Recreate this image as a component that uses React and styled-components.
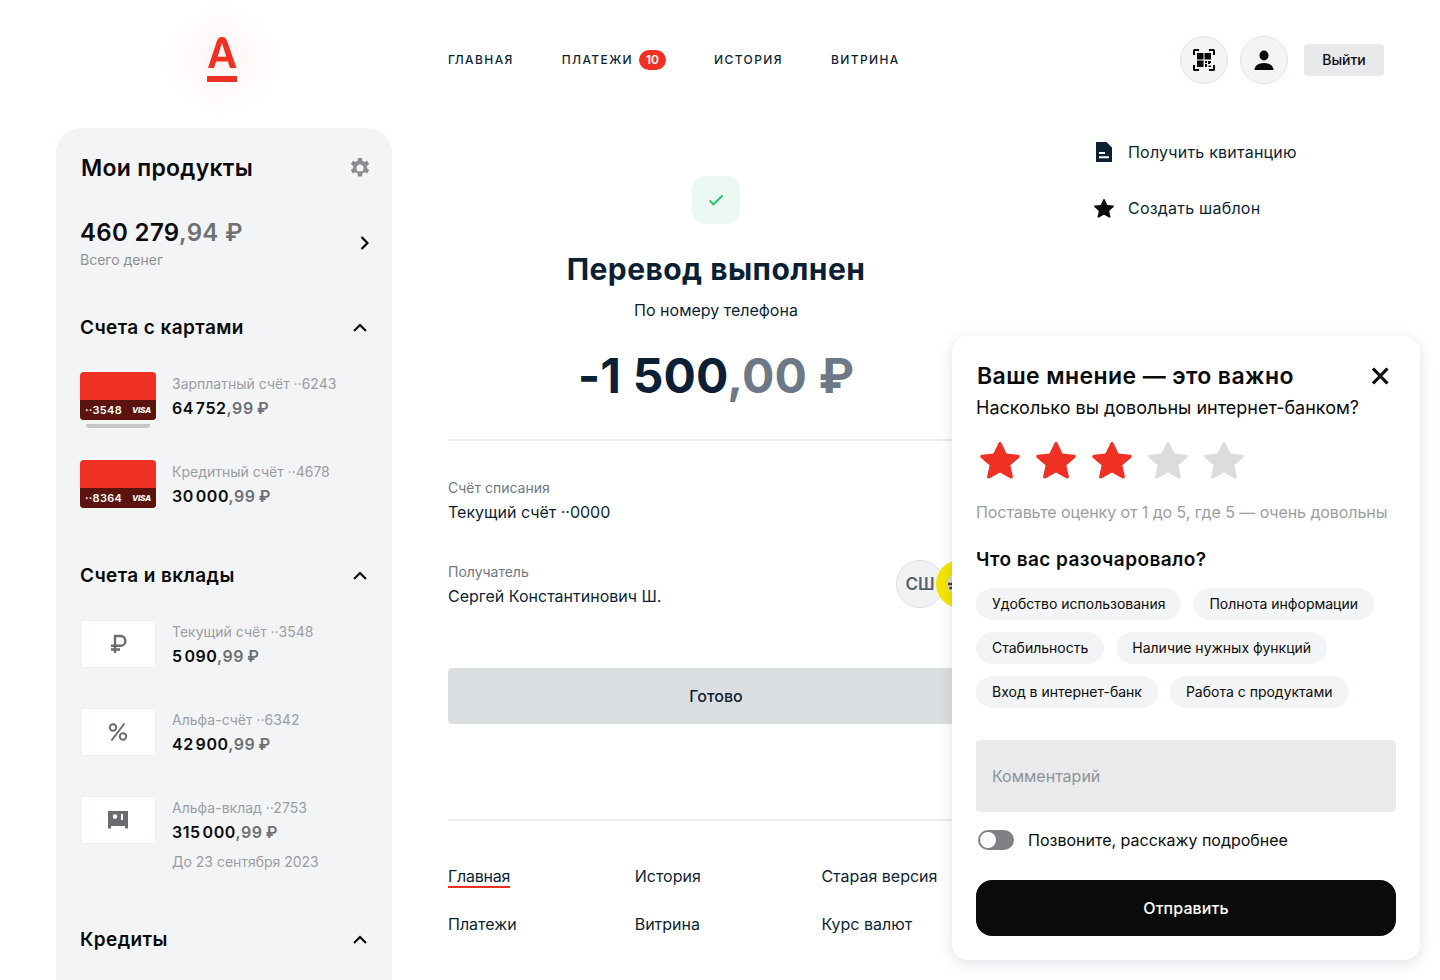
import React from 'react';
import styled, { createGlobalStyle } from 'styled-components';

const Global = createGlobalStyle`
  html, body { margin: 0; padding: 0; background: #fff; }
  body { font-family: Inter, "Noto Sans", sans-serif; color: #0b1f35; }
  * { box-sizing: border-box; }
`;

const Page = styled.div`
  position: relative;
  width: 1440px;
  height: 980px;
  overflow: hidden;
  background: #fff;
`;

const Header = styled.header`
  display: flex;
  align-items: center;
  height: 120px;
  padding: 0 56px;
`;
const LogoCell = styled.div`
  width: 336px;
  flex: none;
  display: flex;
  justify-content: center;
  padding-right: 4px;
`;
const LogoGlow = styled.div`
  width: 124px;
  height: 120px;
  display: flex;
  align-items: center;
  justify-content: center;
  background: radial-gradient(circle closest-side, rgba(239, 49, 36, 0.065) 0%, rgba(239, 49, 36, 0.022) 50%, rgba(239, 49, 36, 0.01) 82%, rgba(239, 49, 36, 0.004) 84%, rgba(239, 49, 36, 0) 100%);
`;
const Nav = styled.nav`
  display: flex;
  align-items: center;
  gap: 48px;
  margin-left: 56px;
  margin-top: -1px;
  flex: 1;
`;
const NavItem = styled.a`
  display: flex;
  align-items: center;
  gap: 6px;
  font-size: 12px;
  font-weight: 500;
  letter-spacing: 1.4px;
  color: #0b1f35;
`;
const Badge = styled.span`
  background: #ef3124;
  color: #fff;
  font-size: 12px;
  font-weight: 600;
  letter-spacing: 0;
  height: 20px;
  min-width: 27px;
  border-radius: 10px;
  display: flex;
  align-items: center;
  justify-content: center;
`;
const HeaderRight = styled.div`
  display: flex;
  align-items: center;
  gap: 12px;
`;
const RoundBtn = styled.div`
  width: 48px;
  height: 48px;
  border-radius: 50%;
  background: #f3f4f5;
  border: 1px solid #e3e4e6;
  display: flex;
  align-items: center;
  justify-content: center;
`;
const LogoutBtn = styled.div`
  margin-left: 4px;
  width: 80px;
  height: 32px;
  border-radius: 4px;
  background: #e9e9eb;
  display: flex;
  align-items: center;
  justify-content: center;
  font-size: 14px;
  font-weight: 500;
  color: #0b0b0b;
  padding-bottom: 1px;
`;

const Body = styled.div`
  display: flex;
  padding: 8px 0 0 56px;
`;
const Sidebar = styled.aside`
  width: 336px;
  height: 900px;
  flex: none;
  background: #f3f4f6;
  border-radius: 24px 24px 0 0;
  padding: 24px 24px 0;
`;
const SideHead = styled.div`
  display: flex;
  justify-content: space-between;
  align-items: center;
  height: 32px;
  margin-right: -4px;
`;
const SideTitle = styled.h2`
  margin: 0 0 0 1px;
  font-size: 23px;
  line-height: 32px;
  font-weight: 600;
  letter-spacing: 0.28px;
  color: #0b0b0b;
`;
const Total = styled.div`
  margin: 33px -5px 0 0;
  display: flex;
  justify-content: space-between;
  align-items: center;
`;
const TotalValue = styled.div`
  font-size: 24px;
  line-height: 32px;
  font-weight: 600;
  letter-spacing: 0.35px;
  color: #0b0b0b;
`;
const Faded = styled.span`
  color: #6e7074;
`;
const TotalLabel = styled.div`
  font-size: 14px;
  line-height: 16px;
  color: #8f9196;
  margin-top: 3px;
`;
const SectionHead = styled.div`
  display: flex;
  justify-content: space-between;
  align-items: center;
  height: 28px;
  margin-top: ${p => p.$top}px;
`;
const SectionTitle = styled.h3`
  margin: 0;
  font-size: 19px;
  line-height: 28px;
  font-weight: 600;
  letter-spacing: 0.4px;
  color: #0b0b0b;
`;
const Rows = styled.div`
  margin-top: 30px;
  display: flex;
  flex-direction: column;
  gap: 40px;
`;
const Row = styled.div`
  display: flex;
  gap: 16px;
  height: 48px;
`;
const CardWrap = styled.div`
  position: relative;
  width: 76px;
  height: 48px;
  flex: none;
`;
const CardFace = styled.div`
  width: 76px;
  height: 48px;
  border-radius: 4px;
  background: #ef3124;
  overflow: hidden;
  display: flex;
  flex-direction: column;
  justify-content: flex-end;
`;
const CardStrip = styled.div`
  height: 20px;
  background: #5c130d;
  color: #fff;
  display: flex;
  justify-content: space-between;
  align-items: center;
  padding: 0 5px;
  font-size: 11px;
  font-weight: 600;
  letter-spacing: 0.3px;
`;
const Visa = styled.span`
  font-size: 8px;
  font-weight: 800;
  font-style: italic;
  letter-spacing: -0.2px;
`;
const CardShadow = styled.div`
  position: absolute;
  left: 6px;
  right: 6px;
  top: 52px;
  height: 4px;
  border-radius: 0 0 3px 3px;
  background: #c6c7c9;
`;
const IconTile = styled.div`
  width: 76px;
  height: 48px;
  flex: none;
  background: #fff;
  border: 1px solid #eceef0;
  border-radius: 4px;
  display: flex;
  align-items: center;
  justify-content: center;
`;
const RowText = styled.div`
  padding-top: 3px;
  min-width: 0;
`;
const RowLabel = styled.div`
  font-size: 14px;
  line-height: 18px;
  color: #9b9da2;
  white-space: nowrap;
`;
const RowAmount = styled.div`
  margin-top: 6px;
  font-size: 16px;
  line-height: 18px;
  font-weight: 600;
  letter-spacing: 0.55px;
  color: #0b0b0b;
  white-space: nowrap;
`;
const RowNote = styled.div`
  margin-top: 12px;
  font-size: 14px;
  line-height: 18px;
  color: #9b9da2;
  white-space: nowrap;
`;

const Main = styled.main`
  width: 536px;
  margin-left: 56px;
  flex: none;
`;
const CheckTile = styled.div`
  margin: 48px auto 0;
  width: 48px;
  height: 48px;
  border-radius: 14px;
  background: #ebf8f1;
  display: flex;
  align-items: center;
  justify-content: center;
`;
const Title = styled.h1`
  margin: 25px 0 0;
  text-align: center;
  font-size: 30px;
  line-height: 40px;
  font-weight: 700;
  letter-spacing: 0.45px;
  color: #0b1f35;
`;
const Sub = styled.div`
  margin-top: 9px;
  text-align: center;
  font-size: 16px;
  line-height: 24px;
`;
const Amount = styled.div`
  margin-top: 22px;
  text-align: center;
  font-size: 48px;
  line-height: 64px;
  font-weight: 700;
  letter-spacing: 0.15px;
  color: #0b1f35;
`;
const AmountFaded = styled.span`
  color: #6d7986;
`;
const Divider = styled.div`
  height: 2px;
  background: #eceef0;
`;
const FirstDivider = styled(Divider)`
  margin-top: 31px;
`;
const Field = styled.div`
  margin-top: ${p => p.$top}px;
  position: relative;
`;
const FieldLabel = styled.div`
  font-size: 14px;
  line-height: 16px;
  color: #6d7986;
`;
const FieldValue = styled.div`
  margin-top: 4px;
  font-size: 16px;
  line-height: 24px;
  color: #0b1f35;
`;
const Avatars = styled.div`
  position: absolute;
  right: 0;
  top: -4px;
  width: 88px;
  height: 48px;
`;
const AvatarInitials = styled.div`
  width: 48px;
  height: 48px;
  border-radius: 50%;
  background: #f1f2f4;
  border: 1px solid #dcdee1;
  display: flex;
  align-items: center;
  justify-content: center;
  font-size: 17px;
  font-weight: 600;
  color: #56616f;
`;
const AvatarYellow = styled.div`
  position: absolute;
  left: 40px;
  top: 0;
  width: 48px;
  height: 48px;
  border-radius: 50%;
  background: #f4e600;
  display: flex;
  align-items: center;
  justify-content: center;
`;
const DoneButton = styled.div`
  margin-top: 60px;
  height: 56px;
  border-radius: 4px;
  background: #dbdee1;
  display: flex;
  align-items: center;
  justify-content: center;
  font-size: 16px;
  font-weight: 500;
  color: #0b1f35;
`;
const SecondDivider = styled(Divider)`
  margin-top: 95px;
`;
const FooterGrid = styled.div`
  margin-top: 43px;
  width: 560px;
  display: grid;
  grid-template-columns: repeat(3, 186.7px);
  row-gap: 24px;
`;
const FooterLink = styled.div`
  display: flex;
  align-items: flex-start;
  height: 24px;
  font-size: 16px;
  line-height: 24px;
  color: #0b1f35;
`;
const ActiveLink = styled.span`
  display: block;
  height: 24px;
  letter-spacing: -0.25px;
  border-bottom: 2px solid #ef3124;
`;

const Actions = styled.div`
  margin-left: 108px;
  padding-top: 12px;
  display: flex;
  flex-direction: column;
  gap: 32px;
`;
const Action = styled.div`
  display: flex;
  align-items: center;
  gap: 12px;
  height: 24px;
  font-size: 16px;
  letter-spacing: 0.22px;
  color: #0b1f35;
  white-space: nowrap;
`;
const ActionIcon = styled.span`
  width: 24px;
  height: 24px;
  display: flex;
  align-items: center;
  justify-content: center;
`;

const Popup = styled.section`
  position: absolute;
  left: 952px;
  top: 336px;
  width: 468px;
  height: 624px;
  background: #fff;
  border-radius: 16px;
  box-shadow: 0 0 16px rgba(11, 31, 53, 0.05), 0 6px 16px rgba(11, 31, 53, 0.08);
  padding: 24px;
  color: #0b0b0b;
`;
const PopupHead = styled.div`
  display: flex;
  justify-content: space-between;
  align-items: center;
  height: 32px;
`;
const PopupTitle = styled.h2`
  margin: 0 0 0 1px;
  font-size: 23px;
  line-height: 32px;
  font-weight: 600;
  letter-spacing: 0.4px;
`;
const CloseSlot = styled.div`
  display: flex;
  margin-right: 4px;
`;
const PopupSub = styled.div`
  margin-top: 4px;
  font-size: 18px;
  line-height: 24px;
  color: #0b0b0b;
  white-space: nowrap;
`;
const Stars = styled.div`
  margin: 22px 0 0 4px;
  display: flex;
  gap: 16px;
`;
const Hint = styled.div`
  margin-top: 21px;
  font-size: 16px;
  line-height: 24px;
  letter-spacing: -0.08px;
  color: #9b9da2;
  white-space: nowrap;
`;
const Question = styled.h3`
  margin: 24px 0 0;
  font-size: 19px;
  line-height: 24px;
  font-weight: 600;
  letter-spacing: 0.42px;
`;
const Chips = styled.div`
  margin-top: 16px;
  display: flex;
  flex-wrap: wrap;
  column-gap: 12px;
  row-gap: 12px;
`;
const Chip = styled.div`
  height: 32px;
  padding: 0 16px 1px;
  border-radius: 16px;
  background: #f3f4f5;
  display: flex;
  align-items: center;
  font-size: 14px;
  color: #0b0b0b;
  white-space: nowrap;
`;
const Comment = styled.div`
  margin-top: 32px;
  height: 72px;
  border-radius: 4px;
  background: #e9eaec;
  padding: 0 16px;
  display: flex;
  align-items: center;
  font-size: 16px;
  color: #8f9196;
`;
const ToggleRow = styled.div`
  margin-top: 16px;
  height: 24px;
  padding-left: 2px;
  display: flex;
  align-items: center;
  gap: 14px;
  font-size: 16px;
`;
const Toggle = styled.div`
  width: 36px;
  height: 20px;
  border-radius: 10px;
  background: #7f8185;
  padding: 2px;
`;
const Knob = styled.div`
  width: 16px;
  height: 16px;
  border-radius: 50%;
  background: #fff;
`;
const Send = styled.div`
  margin-top: 28px;
  height: 56px;
  border-radius: 16px;
  background: #0b0b0b;
  color: #fff;
  display: flex;
  align-items: center;
  justify-content: center;
  font-size: 16px;
  font-weight: 500;
  letter-spacing: 0.1px;
`;

const AlfaLogo = () => (
  <svg width="32" height="46" viewBox="0 0 32 46">
    <path fill="#ef3124" d="M16 0c2.900 0 4.100 1.300 5 3.800L30.500 31H24l-2.100-6.600H10.100L8 31H2L11 3.800C11.900 1.300 13.100 0 16 0zm0 6.200h-.2L11.600 19.700h8.700L16 6.200z" />
    <rect x="1" y="39" width="30" height="6" fill="#ef3124" />
  </svg>
);
const QrIcon = () => (
  <svg width="24" height="24" viewBox="0 0 24 24" fill="#0b0b0b">
    <path d="M1 7V2.500A1.500 1.500 0 0 1 2.500 1H7v2H3v4H1zM17 1h4.500A1.500 1.500 0 0 1 23 2.500V7h-2V3h-4V1zM1 17h2v4h4v2H2.500A1.500 1.500 0 0 1 1 21.500V17zM21 17h2v4.500a1.500 1.500 0 0 1-1.500 1.500H17v-2h4v-4z" />
    <rect x="5" y="5" width="6.500" height="6.500" />
    <rect x="12.500" y="5" width="6.500" height="6.500" />
    <rect x="5" y="12.500" width="6.500" height="6.500" />
    <path d="M13 13h2v2h-2zM16 13h3v2h-1v1h-2zM13 16h2v3h-2zM16.500 17.500h2.500v1.500h-2.500z" />
  </svg>
);
const PersonIcon = () => (
  <svg width="24" height="24" viewBox="0 0 24 24" fill="#0b0b0b">
    <ellipse cx="12" cy="7.500" rx="4.500" ry="5" />
    <path d="M2.500 22c0-3.800 3.500-7 9.500-7s9.500 3.200 9.500 7H2.500z" />
  </svg>
);
const GearIcon = () => (
  <svg width="24" height="24" viewBox="0 0 24 24" fill="#8c8d90">
    <path fillRule="evenodd" d="M10 2h4l.6 3 1.800.9 2.800-1.200 2 3.400-2.400 2c.1.600.1 1.300 0 1.900l2.400 2-2 3.400-2.800-1.200-1.800 1-.6 3.300h-4l-.6-3.300-1.800-1-2.800 1.200-2-3.400 2.400-2a6.500 6.500 0 0 1 0-1.900l-2.400-2 2-3.400 2.800 1.200 1.800-.9L10 2zm2 6.500a3.500 3.500 0 1 0 0 7 3.500 3.500 0 0 0 0-7z" />
  </svg>
);
const ChevronRight = () => (
  <svg width="16" height="16" viewBox="0 0 16 16" fill="none" stroke="#0b0b0b" strokeWidth="2.200">
    <path d="M4.500 2l6 6-6 6" />
  </svg>
);
const ChevronUp = () => (
  <svg width="16" height="16" viewBox="0 0 16 16" fill="none" stroke="#0b0b0b" strokeWidth="2.200">
    <path d="M2 11l6-6 6 6" />
  </svg>
);
const RubleIcon = () => (
  <svg width="24" height="24" viewBox="0 0 24 24" fill="none" stroke="#6a6c70" strokeWidth="2.400">
    <path d="M9 21V4h5.500a4.800 4.800 0 0 1 0 9.800H5M5 17.500h9" />
  </svg>
);
const PercentIcon = () => (
  <svg width="24" height="24" viewBox="0 0 24 24" fill="none" stroke="#6a6c70" strokeWidth="2">
    <circle cx="7" cy="7.500" r="3.200" />
    <circle cx="17" cy="16.500" r="3.200" />
    <path d="M18.500 3.500L5.500 20.500" />
  </svg>
);
const VaultIcon = () => (
  <svg width="24" height="24" viewBox="0 0 24 24" fill="#6a6c70">
    <path fillRule="evenodd" d="M2 3h20v17.500h-3V18H5v2.500H2V3zm7 3.300a2.300 2.300 0 1 0 0 4.600 2.300 2.300 0 0 0 0-4.600zM15 6v6h2V6h-2z" />
  </svg>
);
const Check = () => (
  <svg width="16" height="16" viewBox="0 0 16 16" fill="none" stroke="#2fc26e" strokeWidth="2">
    <path d="M1.500 8.500l4 3.800 9-8.800" />
  </svg>
);
const DocIcon = () => (
  <svg width="24" height="24" viewBox="0 0 24 24">
    <path fill="#0b1f35" fillRule="evenodd" d="M4 2h10.500L20 7.500V22H4V2zm3 10v2h6v-2H7zm0 4.200v2h10v-2H7z" />
  </svg>
);
const StarPath = 'M20 2.500c.8 0 1.300.5 1.600 1.200l4.900 10.900 11.700 1.300c1.500.2 2.100 2 1 3l-8.800 8 2.500 11.800c.3 1.500-1.300 2.600-2.600 1.800L20 34.600 9.700 40.500c-1.300.8-2.900-.3-2.600-1.800l2.500-11.800-8.800-8c-1.100-1-.5-2.800 1-3l11.700-1.300 4.900-10.900c.3-.7.800-1.200 1.600-1.200z';
const Star = ({ color, w = 40, h = 37 }) => (
  <svg width={w} height={h} viewBox="0 2.500 40 38.800" preserveAspectRatio="none">
    <path fill={color} d={StarPath} />
  </svg>
);
const CloseIcon = () => (
  <svg width="24" height="24" viewBox="0 0 24 24" fill="none" stroke="#0b0b0b" strokeWidth="3.200">
    <path d="M5 4.500l14.500 15M19.500 4.500L5 19.500" />
  </svg>
);
const QrBlob = () => (
  <svg width="32" height="32" viewBox="0 0 24 24" fill="#3c3c3c">
    <circle cx="12" cy="12" r="9.500" fill="#d9d9d9" />
    <path d="M7 6h2v2H7zM11 4h2v3h-2zM15 7h2v2h-2zM3 11h3v2H3zM6 8h1.500v2H6zM4 14h2v2H4zM11 9h2v2h-2zM15 11h3v2h-3zM8 15h2v2H8zM12 13h2v2h-2zM11 17h3v2h-3zM16 15h2v2h-2z" />
  </svg>
);

const Money = ({ whole, cents }) => (
  <>
    {whole}
    <Faded>,{cents}{'\u2009'}₽</Faded>
  </>
);

const Section1 = [
  { num: '··3548', label: 'Зарплатный счёт ··6243', whole: '64\u200A752', cents: '99', shadow: true },
  { num: '··8364', label: 'Кредитный счёт ··4678', whole: '30\u200A000', cents: '99' },
];
const Section2 = [
  { icon: <RubleIcon />, label: 'Текущий счёт ··3548', whole: '5\u200A090', cents: '99' },
  { icon: <PercentIcon />, label: 'Альфа-счёт ··6342', whole: '42\u200A900', cents: '99' },
  { icon: <VaultIcon />, label: 'Альфа-вклад ··2753', whole: '315\u200A000', cents: '99', note: 'До 23 сентября 2023' },
];
const chips = ['Удобство использования', 'Полнота информации', 'Стабильность', 'Наличие нужных функций', 'Вход в интернет-банк', 'Работа с продуктами'];

export default function App() {
  return (
    <Page>
      <Global />
      <Header>
        <LogoCell>
          <LogoGlow><AlfaLogo /></LogoGlow>
        </LogoCell>
        <Nav>
          <NavItem>ГЛАВНАЯ</NavItem>
          <NavItem>ПЛАТЕЖИ<Badge>10</Badge></NavItem>
          <NavItem>ИСТОРИЯ</NavItem>
          <NavItem>ВИТРИНА</NavItem>
        </Nav>
        <HeaderRight>
          <RoundBtn><QrIcon /></RoundBtn>
          <RoundBtn><PersonIcon /></RoundBtn>
          <LogoutBtn>Выйти</LogoutBtn>
        </HeaderRight>
      </Header>
      <Body>
        <Sidebar>
          <SideHead>
            <SideTitle>Мои продукты</SideTitle>
            <GearIcon />
          </SideHead>
          <Total>
            <div>
              <TotalValue>460 279<Faded>,94 ₽</Faded></TotalValue>
              <TotalLabel>Всего денег</TotalLabel>
            </div>
            <ChevronRight />
          </Total>
          <SectionHead $top={46}>
            <SectionTitle>Счета с картами</SectionTitle>
            <ChevronUp />
          </SectionHead>
          <Rows>
            {Section1.map(r => (
              <Row key={r.num}>
                <CardWrap>
                  <CardFace>
                    <CardStrip>{r.num}<Visa>VISA</Visa></CardStrip>
                  </CardFace>
                  {r.shadow && <CardShadow />}
                </CardWrap>
                <RowText>
                  <RowLabel>{r.label}</RowLabel>
                  <RowAmount><Money whole={r.whole} cents={r.cents} /></RowAmount>
                </RowText>
              </Row>
            ))}
          </Rows>
          <SectionHead $top={54}>
            <SectionTitle>Счета и вклады</SectionTitle>
            <ChevronUp />
          </SectionHead>
          <Rows>
            {Section2.map(r => (
              <Row key={r.label}>
                <IconTile>{r.icon}</IconTile>
                <RowText>
                  <RowLabel>{r.label}</RowLabel>
                  <RowAmount><Money whole={r.whole} cents={r.cents} /></RowAmount>
                  {r.note && <RowNote>{r.note}</RowNote>}
                </RowText>
              </Row>
            ))}
          </Rows>
          <SectionHead $top={82}>
            <SectionTitle>Кредиты</SectionTitle>
            <ChevronUp />
          </SectionHead>
        </Sidebar>
        <Main>
          <CheckTile><Check /></CheckTile>
          <Title>Перевод выполнен</Title>
          <Sub>По номеру телефона</Sub>
          <Amount>-1 500<AmountFaded>,00 ₽</AmountFaded></Amount>
          <FirstDivider />
          <Field $top={39}>
            <FieldLabel>Счёт списания</FieldLabel>
            <FieldValue>Текущий счёт ··0000</FieldValue>
          </Field>
          <Field $top={40}>
            <FieldLabel>Получатель</FieldLabel>
            <FieldValue>Сергей Константинович Ш.</FieldValue>
            <Avatars>
              <AvatarInitials>СШ</AvatarInitials>
              <AvatarYellow><QrBlob /></AvatarYellow>
            </Avatars>
          </Field>
          <DoneButton>Готово</DoneButton>
          <SecondDivider />
          <FooterGrid>
            <FooterLink><ActiveLink>Главная</ActiveLink></FooterLink>
            <FooterLink>История</FooterLink>
            <FooterLink>Старая версия</FooterLink>
            <FooterLink>Платежи</FooterLink>
            <FooterLink>Витрина</FooterLink>
            <FooterLink>Курс валют</FooterLink>
          </FooterGrid>
        </Main>
        <Actions>
          <Action><ActionIcon><DocIcon /></ActionIcon>Получить квитанцию</Action>
          <Action><ActionIcon><Star color="#0b0b0b" w={20} h={19} /></ActionIcon>Создать шаблон</Action>
        </Actions>
      </Body>
      <Popup>
        <PopupHead>
          <PopupTitle>Ваше мнение — это важно</PopupTitle>
          <CloseSlot><CloseIcon /></CloseSlot>
        </PopupHead>
        <PopupSub>Насколько вы довольны интернет-банком?</PopupSub>
        <Stars>
          <Star color="#ef3124" />
          <Star color="#ef3124" />
          <Star color="#ef3124" />
          <Star color="#dcdcdc" />
          <Star color="#dcdcdc" />
        </Stars>
        <Hint>Поставьте оценку от 1 до 5, где 5 — очень довольны</Hint>
        <Question>Что вас разочаровало?</Question>
        <Chips>
          {chips.map(c => <Chip key={c}>{c}</Chip>)}
        </Chips>
        <Comment>Комментарий</Comment>
        <ToggleRow>
          <Toggle><Knob /></Toggle>
          Позвоните, расскажу подробнее
        </ToggleRow>
        <Send>Отправить</Send>
      </Popup>
    </Page>
  );
}
